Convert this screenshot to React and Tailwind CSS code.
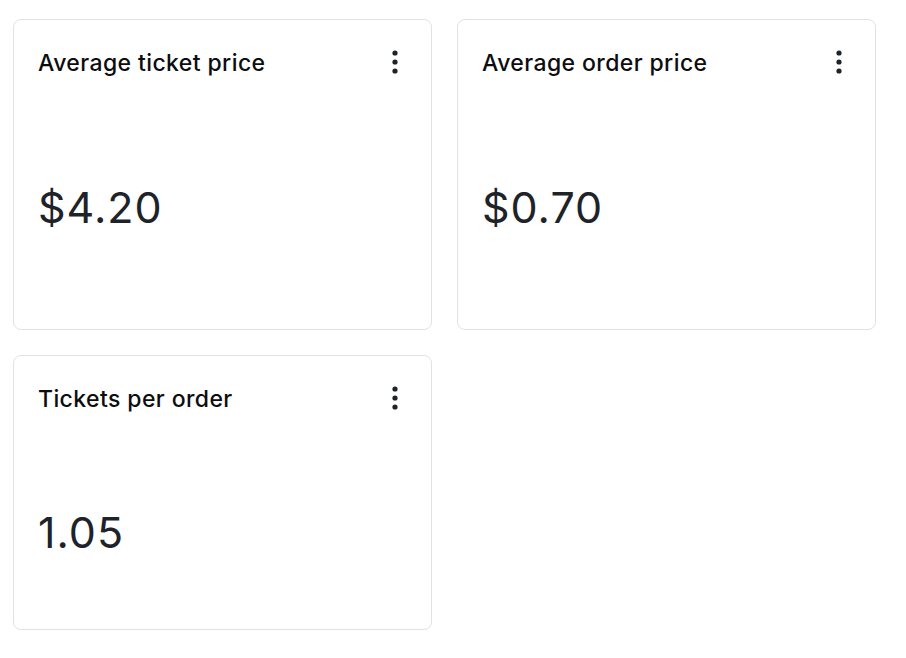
import React from "react";

function Dots() {
  return (
    <svg width="6" height="24" viewBox="0 0 6 24" className="text-[#1e2329]">
      <circle cx="3" cy="3" r="2.6" fill="currentColor" />
      <circle cx="3" cy="12" r="2.6" fill="currentColor" />
      <circle cx="3" cy="21" r="2.6" fill="currentColor" />
    </svg>
  );
}

function Card({ title, value, h, gap }) {
  return (
    <div className={`bg-white border border-[#e2e2e4] rounded-lg pl-6 pr-[33px] pt-[26px] flex flex-col ${h}`}>
      <div className="flex items-start justify-between">
        <div className="text-[23px] leading-[34px] text-[#0d0d0f] font-medium tracking-[0.4px]">{title}</div>
        <div className="pt-[4px]"><Dots /></div>
      </div>
      <div className={`${gap} text-[43px] leading-[50px] text-[#1e2329] tracking-[1px]`}>{value}</div>
    </div>
  );
}

export default function App() {
  return (
    <div className="min-h-[658px] bg-white pl-[13px] pt-[19px]" style={{ fontFamily: "Inter, 'Liberation Sans', sans-serif" }}>
      <div className="grid grid-cols-[419px_419px] gap-x-[25px] gap-y-[25px]">
        <Card title="Average ticket price" value="$4.20" h="h-[311px]" gap="mt-[102px]" />
        <Card title="Average order price" value="$0.70" h="h-[311px]" gap="mt-[102px]" />
        <Card title="Tickets per order" value="1.05" h="h-[275px]" gap="mt-[91px]" />
      </div>
    </div>
  );
}
